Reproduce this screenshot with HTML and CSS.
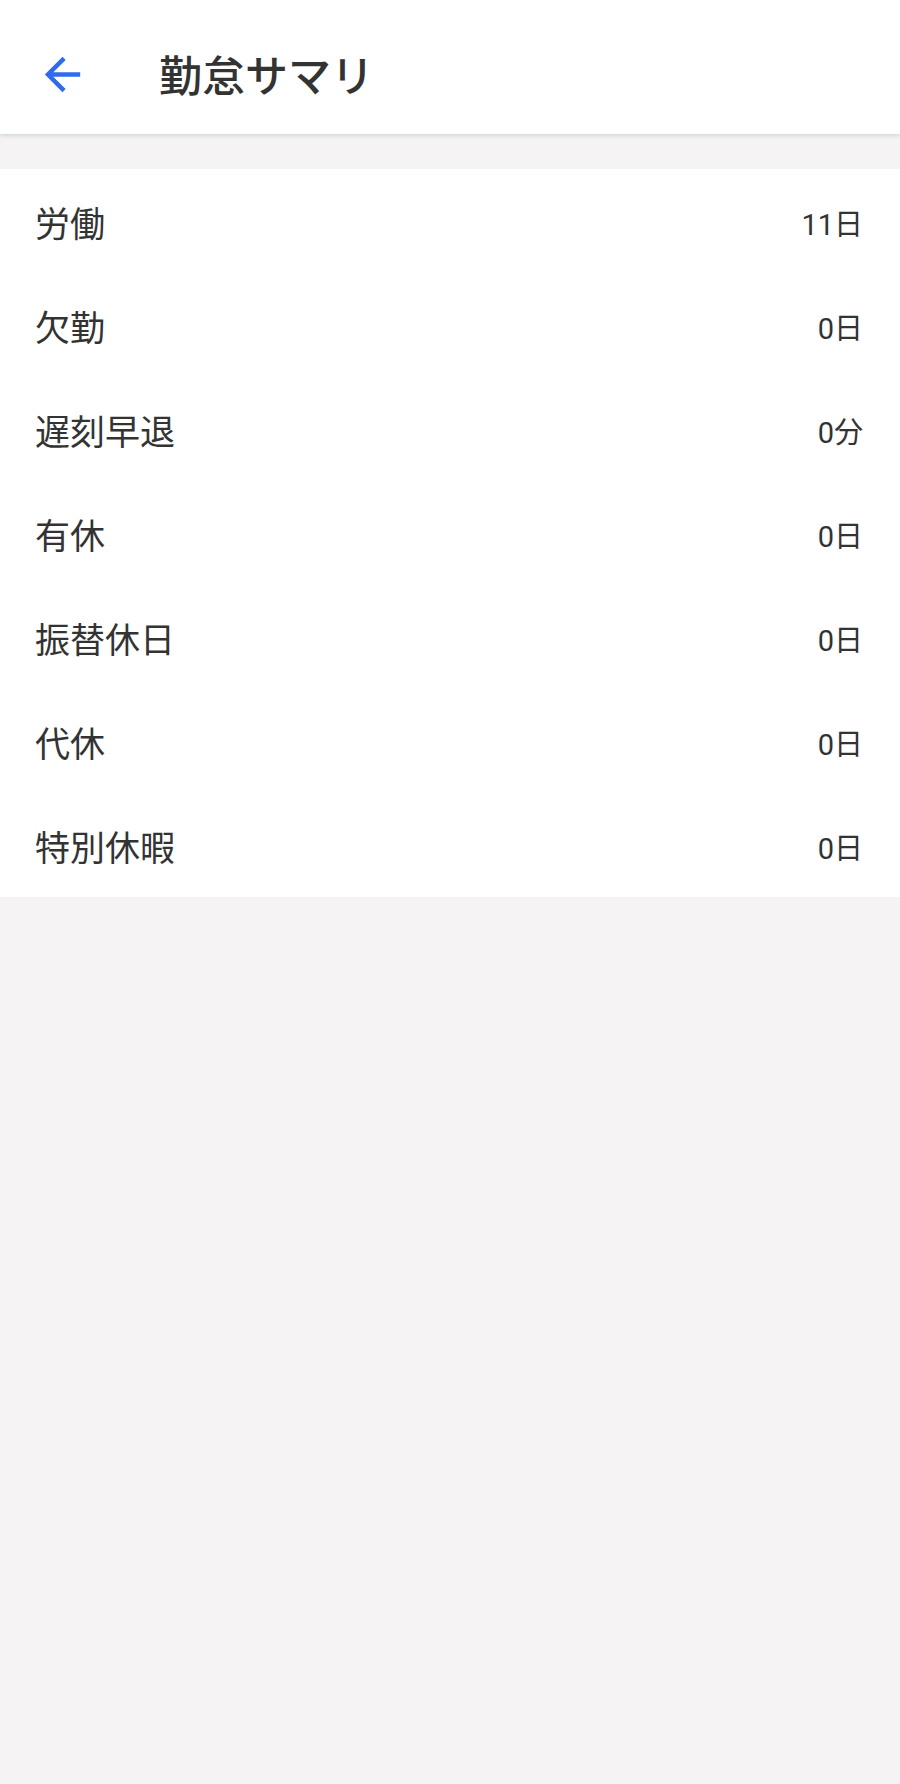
FILE: index.html
```html
<!DOCTYPE html>
<html lang="ja">
<head>
<meta charset="utf-8">
<link rel="stylesheet" href="styles.css">
</head>
<body>
<header class="appbar">
  <svg class="back" viewBox="0 0 24 24" width="53" height="53"><path d="M20 11H7.83l5.59-5.59L12 4l-8 8 8 8 1.41-1.41L7.83 13H20v-2z" fill="#2f6bec"/></svg>
  <h1 class="title">勤怠サマリ</h1>
</header>
<main class="content">
  <ul class="list">
    <li class="row"><span class="label">労働</span><span class="value">11日</span></li>
    <li class="row"><span class="label">欠勤</span><span class="value">0日</span></li>
    <li class="row"><span class="label">遅刻早退</span><span class="value">0分</span></li>
    <li class="row"><span class="label">有休</span><span class="value">0日</span></li>
    <li class="row"><span class="label">振替休日</span><span class="value">0日</span></li>
    <li class="row"><span class="label">代休</span><span class="value">0日</span></li>
    <li class="row"><span class="label">特別休暇</span><span class="value">0日</span></li>
  </ul>
</main>
</body>
</html>
```
FILE: styles.css
```css
html, body {
  margin: 0;
  padding: 0;
  background: #f5f3f4;
  font-family: Roboto, "Noto Sans CJK JP", "Noto Sans", sans-serif;
  color: #333333;
}
.appbar {
  box-sizing: border-box;
  height: 134px;
  background: #ffffff;
  display: flex;
  align-items: center;
  padding: 14px 0 0 36px;
  box-shadow: 0 2px 4px rgba(0,0,0,0.12);
  position: relative;
  z-index: 1;
}
.back {
  display: block;
  flex: none;
}
.title {
  margin: 6px 0 0 70px;
  font-size: 43px;
  font-weight: 500;
  color: #333333;
  line-height: 1;
}
.content {
  padding-top: 35px;
}
.list {
  list-style: none;
  margin: 0;
  padding: 0;
  background: #ffffff;
}
.row {
  box-sizing: border-box;
  height: 104px;
  display: flex;
  align-items: center;
  justify-content: space-between;
  padding: 8px 37px 0 35px;
}
.label {
  font-size: 35px;
  line-height: 1;
}
.value {
  font-size: 29px;
  line-height: 1;
}
```
